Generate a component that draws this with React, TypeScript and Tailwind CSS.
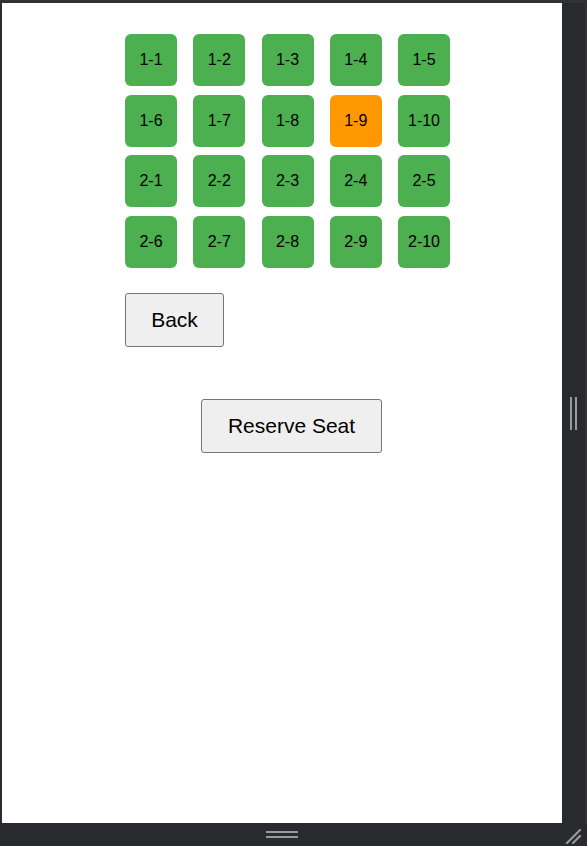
const seats = [
  '1-1', '1-2', '1-3', '1-4', '1-5',
  '1-6', '1-7', '1-8', '1-9', '1-10',
  '2-1', '2-2', '2-3', '2-4', '2-5',
  '2-6', '2-7', '2-8', '2-9', '2-10',
]

const selected = '1-9'

function Seat({ label }: { label: string }) {
  const active = label === selected
  return (
    <div
      className={
        'w-[52px] h-[52px] rounded-[6px] flex items-center justify-center text-[16px] text-black ' +
        (active ? 'bg-[#ff9800]' : 'bg-[#4caf50]')
      }
    >
      {label}
    </div>
  )
}

export default function App() {
  return (
    <div className="w-[587px] h-[846px] bg-[#292a2d] flex flex-col overflow-hidden" style={{ fontFamily: '"Liberation Sans", Arial, sans-serif' }}>
      <div className="h-[3px] bg-[#313235]" />
      <div className="flex h-[820px]">
        <div className="w-[2px] bg-[#2b2c2f]" />
        <div className="w-[560px] h-full bg-white flex flex-col items-start pl-[123px] pt-[31px]">
          <div className="grid grid-cols-5 gap-x-[16.25px] gap-y-[8.67px]">
            {seats.map(s => <Seat key={s} label={s} />)}
          </div>
          <button className="mt-[25px] w-[99px] h-[54px] pb-[1px] bg-[#efefef] border border-[#767676] rounded-[3px] text-[21px] text-black">
            Back
          </button>
          <button className="mt-[52px] ml-[76px] w-[181px] h-[54px] pb-[1px] bg-[#efefef] border border-[#767676] rounded-[3px] text-[21px] text-black">
            Reserve Seat
          </button>
        </div>
        <div className="flex-1 flex">
          <div className="flex-1 flex items-center pl-[8px]">
            <div className="flex gap-[3px]">
              <div className="w-[2px] h-[33px] bg-[#9a9a9a]" />
              <div className="w-[2px] h-[33px] bg-[#9a9a9a]" />
            </div>
          </div>
          <div className="w-[2px] bg-[#333437]" />
        </div>
      </div>
      <div className="flex-1 relative flex flex-col items-center justify-center gap-[3px] pl-[2px] pr-[25px]">
        <div className="w-[32px] h-[2px] bg-[#9a9a9a]" />
        <div className="w-[32px] h-[2px] bg-[#9a9a9a]" />
        <svg className="absolute right-[5px] bottom-[2px]" width="17" height="17" viewBox="0 0 17 17">
          <line x1="2" y1="16" x2="15" y2="3" stroke="#9a9a9a" strokeWidth="2.2" strokeLinecap="round" />
          <line x1="8" y1="16" x2="15" y2="9" stroke="#9a9a9a" strokeWidth="2.2" strokeLinecap="round" />
        </svg>
      </div>
    </div>
  )
}
